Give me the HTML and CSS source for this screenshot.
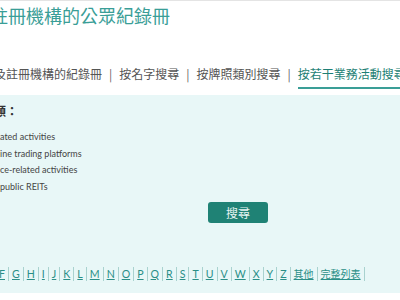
FILE: index.html
```html
<!DOCTYPE html>
<html lang="zh-Hant">
<head>
    <meta charset="UTF-8">
    <meta name="viewport" content="width=device-width, initial-scale=1.0">
    <title>持牌人及註冊機構的公眾紀錄冊</title>
    <link rel="stylesheet" href="styles.css">
</head>
<body>
    <!-- Page Title -->
    <header class="site-header">
        <h1 class="page-title">註冊機構的公眾紀錄冊</h1>
    </header>

    <!-- Search Tabs -->
    <nav class="tabs">
        <a class="tab tab-first" href="#">及註冊機構的紀錄冊</a>
        <span class="tab-sep">|</span>
        <a class="tab" href="#">按名字搜尋</a>
        <span class="tab-sep">|</span>
        <a class="tab" href="#">按牌照類別搜尋</a>
        <span class="tab-sep">|</span>
        <a class="tab active" href="#">按若干業務活動搜尋</a>
    </nav>

    <!-- Search Panel -->
    <section class="search-panel">
        <div class="panel-label">類：</div>
        <ul class="activity-list">
            <li>ated activities</li>
            <li>ine trading platforms</li>
            <li>ce-related activities</li>
            <li>public REITs</li>
        </ul>
        <div class="panel-actions">
            <button class="search-button">搜尋</button>
        </div>

        <!-- Alphabet Index -->
        <div class="alpha-index">
            <a href="#">F</a><a href="#">G</a><a href="#">H</a><a href="#">I</a><a href="#">J</a><a href="#">K</a><a href="#">L</a><a href="#">M</a><a href="#">N</a><a href="#">O</a><a href="#">P</a><a href="#">Q</a><a href="#">R</a><a href="#">S</a><a href="#">T</a><a href="#">U</a><a href="#">V</a><a href="#">W</a><a href="#">X</a><a href="#">Y</a><a href="#">Z</a><a class="alpha-cjk" href="#">其他</a><a class="alpha-cjk" href="#">完整列表</a>
        </div>
    </section>
</body>
</html>
```

FILE: styles.css
```css
/* General Styling */
body {
    margin: 0;
    font-family: Lato, "Noto Sans CJK TC", sans-serif;
    color: #333;
    background: #fff;
    overflow: hidden;
    border-top: 1px solid #e4e4e4;
}

/* Title */
.site-header {
    padding-top: 1px;
}

.page-title {
    margin: 0 0 0 -10px;
    font-family: "Noto Sans CJK TC", sans-serif;
    font-size: 18px;
    font-weight: 400;
    line-height: 26px;
    color: #3a9e97;
    white-space: nowrap;
}

/* Tabs */
.tabs {
    display: flex;
    align-items: flex-end;
    margin-top: 36px;
    margin-left: -6px;
    white-space: nowrap;
    font-family: "Noto Sans CJK TC", sans-serif;
    font-size: 12px;
    line-height: 20px;
}

.tab {
    color: #555;
    text-decoration: none;
    padding-bottom: 5px;
}

.tab.active {
    color: #1d7f75;
    padding-bottom: 3px;
    border-bottom: 2px solid #3a9e97;
}

.tab-sep {
    color: #666;
    padding: 0 7px 5px;
}

/* Search Panel */
.search-panel {
    margin-top: 6px;
    background: #e8f7f7;
    padding: 8px 0 12px;
}

.panel-label {
    font-family: "Noto Sans CJK TC", sans-serif;
    font-size: 12px;
    font-weight: 700;
    line-height: 16px;
    color: #333;
    margin-left: -6px;
}

.activity-list {
    list-style: none;
    margin: 10px 0 0;
    padding: 0;
    font-size: 9px;
    line-height: 16.7px;
    color: #444;
    white-space: nowrap;
}

.panel-actions {
    margin-top: 6px;
    padding-left: 208px;
}

.search-button {
    width: 60px;
    height: 21px;
    padding: 0;
    border: none;
    border-radius: 3px;
    background: #1f8275;
    color: #e6f4f2;
    font-family: "Noto Sans CJK TC", sans-serif;
    font-size: 12px;
    cursor: pointer;
}

/* Alphabet Index */
.alpha-index {
    display: flex;
    align-items: center;
    margin-top: 44px;
    margin-left: -4px;
    font-size: 10.6px;
    line-height: 14px;
    white-space: nowrap;
}

.alpha-index a {
    color: #2a8f87;
    padding: 0 3px;
    border-right: 1px solid #a9d2cf;
}

.alpha-index .alpha-cjk {
    font-size: 10px;
}
```
